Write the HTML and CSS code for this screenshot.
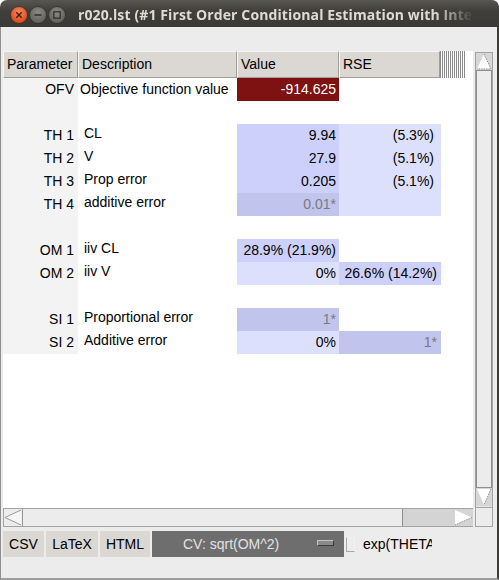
FILE: index.html
```html
<!DOCTYPE html>
<html>
<head>
<meta charset="utf-8">
<link rel="stylesheet" href="styles.css">
</head>
<body>
<div class="window">
  <div class="titlebar">
    <div class="wbtns">
      <svg class="wb" width="18" height="18" viewBox="0 0 18 18">
        <defs>
          <radialGradient id="gc" cx="50%" cy="35%" r="65%">
            <stop offset="0" stop-color="#f7895a"/>
            <stop offset="1" stop-color="#d9441a"/>
          </radialGradient>
          <radialGradient id="gg" cx="50%" cy="35%" r="65%">
            <stop offset="0" stop-color="#8c8a85"/>
            <stop offset="1" stop-color="#5f5d58"/>
          </radialGradient>
        </defs>
        <circle cx="9" cy="9" r="8.5" fill="url(#gc)" stroke="#3a2e28" stroke-width="0.8"/>
        <path d="M6.3 6.3 L11.7 11.7 M11.7 6.3 L6.3 11.7" stroke="#4a1a08" stroke-width="1.4"/>
      </svg>
      <svg class="wb" width="18" height="18" viewBox="0 0 18 18">
        <circle cx="9" cy="9" r="8.5" fill="url(#gg)" stroke="#2e2d2a" stroke-width="0.8"/>
        <path d="M5.5 9 H12.5" stroke="#33322e" stroke-width="1.6"/>
      </svg>
      <svg class="wb" width="18" height="18" viewBox="0 0 18 18">
        <circle cx="9" cy="9" r="8.5" fill="url(#gg)" stroke="#2e2d2a" stroke-width="0.8"/>
        <rect x="5.8" y="5.8" width="6.4" height="6.4" fill="none" stroke="#33322e" stroke-width="1.3"/>
      </svg>
    </div>
    <div class="title">r020.lst (#1 First Order Conditional Estimation with Interaction)</div>
  </div>
  <div class="client">
    <div class="pane">
      <div class="viewport">
        <div class="hdr">
          <div class="hc w-par">Parameter</div>
          <div class="hc w-desc">Description</div>
          <div class="hc w-val">Value</div>
          <div class="hc w-rse">RSE</div>
          <div class="hatch"></div>
        </div>
        <div class="row">
          <div class="par">OFV</div><div class="desc">Objective function value</div><div class="val ofv">-914.625</div><div class="rse"></div>
        </div>
        <div class="row"><div class="par"></div><div></div><div></div><div></div></div>
        <div class="row">
          <div class="par">TH 1</div><div class="desc ind">CL</div><div class="val est">9.94</div><div class="rse lt sp">(5.3%)</div>
        </div>
        <div class="row">
          <div class="par">TH 2</div><div class="desc ind">V</div><div class="val est">27.9</div><div class="rse lt sp">(5.1%)</div>
        </div>
        <div class="row">
          <div class="par">TH 3</div><div class="desc ind">Prop error</div><div class="val est">0.205</div><div class="rse lt sp">(5.1%)</div>
        </div>
        <div class="row">
          <div class="par">TH 4</div><div class="desc ind">additive error</div><div class="val fix">0.01*</div><div class="rse lt"></div>
        </div>
        <div class="row"><div class="par"></div><div></div><div></div><div></div></div>
        <div class="row">
          <div class="par">OM 1</div><div class="desc ind">iiv CL</div><div class="val est">28.9% (21.9%)</div><div class="rse"></div>
        </div>
        <div class="row">
          <div class="par">OM 2</div><div class="desc ind">iiv V</div><div class="val lt">0%</div><div class="rse est">26.6% (14.2%)</div>
        </div>
        <div class="row"><div class="par"></div><div></div><div></div><div></div></div>
        <div class="row">
          <div class="par">SI 1</div><div class="desc ind">Proportional error</div><div class="val fix">1*</div><div class="rse"></div>
        </div>
        <div class="row">
          <div class="par">SI 2</div><div class="desc ind">Additive error</div><div class="val lt">0%</div><div class="rse fix">1*</div>
        </div>
      </div>
      <div class="vscroll">
        <div class="arr">
          <svg width="16" height="17" viewBox="0 0 16 17">
            <polygon points="1,16 8,1 15,16" fill="#fff"/>
            <path d="M8 1 L15 16 L1 16" fill="none" stroke="#8c8c8c" stroke-width="1" stroke-dasharray="1.5 1"/>
          </svg>
        </div>
        <div class="vthumb"></div>
        <div class="arr">
          <svg width="16" height="18" viewBox="0 0 16 18">
            <polygon points="1,1 15,1 8,17" fill="#fff"/>
            <path d="M15 1 L8 17" fill="none" stroke="#8c8c8c" stroke-width="1" stroke-dasharray="1.5 1"/>
          </svg>
        </div>
      </div>
      <div class="hscroll">
        <div class="harr light">
          <svg width="18" height="17" viewBox="0 0 18 17">
            <polygon points="17,1 17,16 1,8.5" fill="#f6f6f6"/>
            <path d="M17 1 L1 8.5 L17 16" fill="none" stroke="#9a9a9a" stroke-width="1"/>
          </svg>
        </div>
        <div class="hthumb"></div>
        <div class="htrough"></div>
        <div class="harr">
          <svg width="19" height="17" viewBox="0 0 19 17">
            <polygon points="1,1 1,16 18,8.5" fill="#fff"/>
            <path d="M18 8.5 L1 16" fill="none" stroke="#8c8c8c" stroke-width="1" stroke-dasharray="1.5 1"/>
          </svg>
        </div>
      </div>
      <div class="corner"></div>
    </div>
    <div class="toolbar">
      <div class="btn b-csv">CSV</div>
      <div class="btn b-latex">LaTeX</div>
      <div class="btn b-html">HTML</div>
      <div class="menu">
        <span class="menu-text">CV: sqrt(OM^2)</span>
        <span class="menu-ind"></span>
      </div>
      <span class="check"></span>
      <span class="check-label">exp(THETA)</span>
    </div>
  </div>
</div>
</body>
</html>
```

FILE: styles.css
```css
html, body {
  margin: 0;
  padding: 0;
  background: #ffffff;
}

.window {
  width: 499px;
  height: 580px;
  display: flex;
  flex-direction: column;
  font-family: "Liberation Sans", Arial, sans-serif;
  font-size: 14px;
  color: #000;
}

.titlebar {
  height: 27px;
  flex: 0 0 27px;
  display: flex;
  align-items: center;
  background: linear-gradient(#57564f, #403f3b 40%, #3a3935);
  border-radius: 7px 7px 0 0;
  box-sizing: border-box;
  padding-left: 10px;
}

.wbtns {
  display: flex;
  gap: 1px;
  padding-top: 3px;
}

.wb {
  display: block;
}

.title {
  margin-left: 12px;
  width: 396px;
  overflow: hidden;
  white-space: nowrap;
  font-family: "Open Sans", "DejaVu Sans", sans-serif;
  font-weight: 700;
  font-size: 14px;
  letter-spacing: 0.12px;
  color: #dfdbd2;
  padding-top: 2px;
  -webkit-mask-image: linear-gradient(90deg, #000 90%, transparent 100%);
  mask-image: linear-gradient(90deg, #000 90%, transparent 100%);
}

.client {
  flex: 1;
  background: #ececec;
  border-left: 1px solid #8f8f8f;
  border-right: 2px solid #3e3d39;
  border-bottom: 2px solid #9d9d9d;
  padding: 24px 4px 0 2px;
  display: flex;
  flex-direction: column;
}

.pane {
  display: grid;
  grid-template-columns: 470px 18px;
  grid-template-rows: 457px 19px;
  column-gap: 2px;
}

.viewport {
  background: #fff;
  overflow: hidden;
}

.hdr {
  display: flex;
  height: 27px;
}

.hc {
  box-sizing: border-box;
  height: 27px;
  background: #dbd7d2;
  border-top: 1px solid #f6f5f3;
  border-left: 1px solid #f6f5f3;
  border-right: 1px solid #a19e99;
  border-bottom: 1px solid #a19e99;
  padding-left: 3px;
  line-height: 25px;
  white-space: nowrap;
}

.w-par { width: 75px; }
.w-desc { width: 159px; }
.w-val { width: 102px; }
.w-rse { width: 101px; }

.hatch {
  width: 25px;
  height: 27px;
  background: repeating-linear-gradient(90deg, #8a8a8a 0 1px, #ffffff 1px 2px);
}

.row {
  display: grid;
  grid-template-columns: 75px 159px 102px 102px;
  height: 23px;
  line-height: 23px;
  white-space: nowrap;
}

.par {
  background: #f3f3f3;
  text-align: right;
  padding-right: 4px;
}

.desc {
  padding-left: 2px;
}

.desc.ind {
  padding-left: 6px;
  line-height: 19px;
}

.val, .rse {
  text-align: right;
  padding-right: 3px;
}

.rse {
  padding-right: 4px;
}

.rse.sp {
  padding-right: 7px;
}

.ofv {
  background: #7e1111;
  color: #fff;
}

.est {
  background: #ccd0fa;
}

.lt {
  background: #dde0fd;
}

.fix {
  background: #c1c4ec;
  color: #7a7a7e;
}

/* vertical scrollbar */
.vscroll {
  box-sizing: border-box;
  border: 1px solid #a3a3a3;
  background: #e6e6e6;
  display: flex;
  flex-direction: column;
  margin-top: 1px;
}

.arr {
  height: 17px;
  background: #d6d6d6;
  display: flex;
  align-items: center;
  justify-content: center;
}

.arr:last-child {
  height: 18px;
  margin-bottom: 1px;
}

.vthumb {
  flex: 1;
  box-sizing: border-box;
  border: 1px solid #8e8e8e;
  background: #ececec;
}

/* horizontal scrollbar */
.hscroll {
  box-sizing: border-box;
  border-top: 1px solid #a3a3a3;
  border-bottom: 1px solid #a3a3a3;
  border-left: 1px solid #a3a3a3;
  display: flex;
  background: #d4d4d4;
}

.harr {
  width: 19px;
  display: flex;
  align-items: center;
  justify-content: center;
  background: #d4d4d4;
}

.harr.light {
  width: 18px;
  background: #ececec;
}

.hthumb {
  width: 381px;
  box-sizing: border-box;
  background: #ececec;
  border-left: 1px solid #9a9a9a;
  border-right: 1px solid #8e8e8e;
}

.htrough {
  flex: 1;
  background: #d4d4d4;
}

.corner {
  box-sizing: border-box;
  border: 1px solid #a3a3a3;
  background: #ececec;
  margin-top: -1px;
}

/* toolbar */
.toolbar {
  margin-top: 4px;
  height: 26px;
  display: flex;
  align-items: center;
  gap: 2px;
}

.btn {
  height: 26px;
  line-height: 26px;
  background: #dbd7d2;
  text-align: center;
  box-sizing: border-box;
}

.b-csv { width: 41px; }
.b-latex { width: 52px; }
.b-html { width: 50px; }

.menu {
  width: 192px;
  height: 26px;
  background: #6e6e6e;
  display: flex;
  align-items: center;
  box-sizing: border-box;
  padding-left: 31px;
}

.menu-text {
  color: #e2e2e2;
  line-height: 26px;
  white-space: nowrap;
}

.menu-ind {
  width: 17px;
  height: 6px;
  box-sizing: border-box;
  margin-left: 38px;
  margin-top: -3px;
  background: #8a8a8a;
  border-top: 1px solid #c4c4c4;
  border-left: 1px solid #c4c4c4;
  border-bottom: 1px solid #3c3c3c;
  border-right: 1px solid #3c3c3c;
}

.check {
  width: 9px;
  height: 15px;
  box-sizing: border-box;
  border-left: 1px solid #a8a8a8;
  border-bottom: 1px solid #a8a8a8;
  border-top: 1px solid #f2f2f2;
  border-right: 1px solid #f2f2f2;
}

.check-label {
  margin-left: 6px;
  width: 69px;
  overflow: hidden;
  white-space: nowrap;
  line-height: 26px;
}
```
